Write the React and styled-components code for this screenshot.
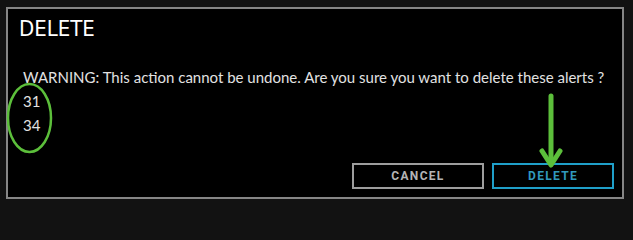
import styled, { createGlobalStyle } from "styled-components"

const GlobalStyle = createGlobalStyle`
  html, body {
    margin: 0;
    padding: 0;
    background: #121212;
  }
  #root {
    position: relative;
    width: 633px;
    height: 208px;
  }
`

// Page wrapper, dialog sits in the top left with a small offset
const Page = styled.div`
  width: 633px;
  height: 208px;
  padding: 7px 0 0 6px;
  box-sizing: border-box;
  background: #121212;
`

const Dialog = styled.div`
  width: 618px;
  height: 192px;
  box-sizing: border-box;
  border: 2px solid #868686;
  background: #000;
  display: flex;
  flex-direction: column;
  padding: 7px 8px 8px 10px;
`

const Title = styled.h1`
  margin: 0;
  font-family: "DejaVu Sans Condensed", "DejaVu Sans", sans-serif;
  font-weight: normal;
  font-size: 22px;
  line-height: 26px;
  color: #fff;
  padding-left: 1px;
`

const Body = styled.div`
  margin-top: 23px;
  padding-left: 5px;
  font-family: Lato, "Open Sans", sans-serif;
  font-size: 15px;
  line-height: 24px;
  color: #e2e2e2;
`

const Line = styled.div`
  white-space: nowrap;
`

const Footer = styled.div`
  margin-top: auto;
  display: flex;
  justify-content: flex-end;
  gap: 8px;
`

const Button = styled.button`
  width: ${(p) => p.$width}px;
  height: 26px;
  box-sizing: border-box;
  background: #000;
  border: 2px solid ${(p) => (p.$primary ? "#1f9fc9" : "#9d9d9d")};
  color: ${(p) => (p.$primary ? "#3199bd" : "#b4b4b4")};
  font-family: Roboto, "Liberation Sans", sans-serif;
  font-weight: bold;
  font-size: 12px;
  letter-spacing: 1.3px;
  padding: 0;
  cursor: pointer;
`

// Green annotation drawn over the dialog
const Overlay = styled.svg`
  position: absolute;
  top: 0;
  left: 0;
  pointer-events: none;
`

function App() {
  const alerts = [31, 34]
  return (
    <>
      <GlobalStyle />
      <Page>
        <Dialog>
          <Title>DELETE</Title>
          <Body>
            <Line>
              WARNING: This action cannot be undone. Are you sure you want to
              delete these alerts ?
            </Line>
            {alerts.map((id) => (
              <Line key={id}>{id}</Line>
            ))}
          </Body>
          <Footer>
            <Button $width={132}>CANCEL</Button>
            <Button $width={122} $primary>
              DELETE
            </Button>
          </Footer>
        </Dialog>
      </Page>
      <Overlay width="633" height="208" viewBox="0 0 633 208">
        <ellipse
          cx="29.5"
          cy="118"
          rx="21.5"
          ry="34"
          fill="none"
          stroke="#5cbf3b"
          strokeWidth="2.5"
        />
        <g
          stroke="#5cbf3b"
          strokeWidth="5"
          strokeLinecap="round"
          strokeLinejoin="round"
          fill="none"
        >
          <line x1="551" y1="96" x2="551" y2="164" />
          <polyline points="542,151 551,165 560,151" />
        </g>
      </Overlay>
    </>
  )
}

export default App
